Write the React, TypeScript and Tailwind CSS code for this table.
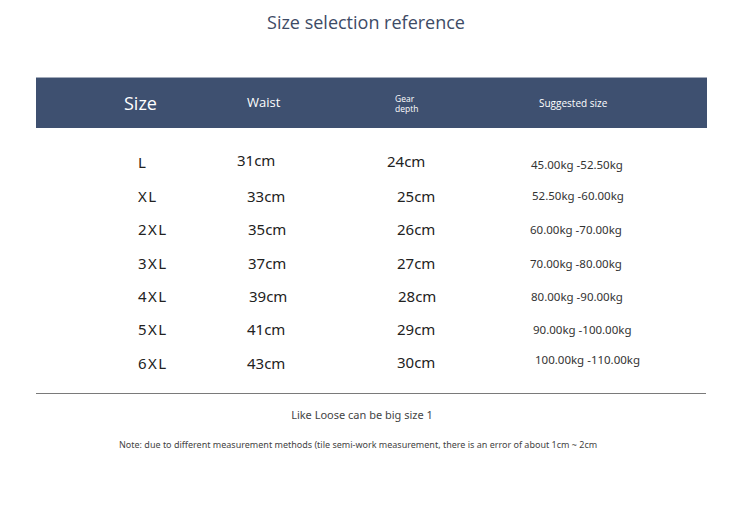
type Row = {
  size: string;
  waist: string;
  gear: string;
  kg: string;
  waistCls: string;
  gearCls: string;
  kgCls: string;
};

const rows: Row[] = [
  { size: "L", waist: "31cm", gear: "24cm", kg: "45.00kg -52.50kg", waistCls: "ml-[-10px] -translate-y-[2px]", gearCls: "ml-[-10px] -translate-y-[1px]", kgCls: "translate-y-[2px]" },
  { size: "XL", waist: "33cm", gear: "25cm", kg: "52.50kg -60.00kg", waistCls: "", gearCls: "", kgCls: "ml-[1px]" },
  { size: "2XL", waist: "35cm", gear: "26cm", kg: "60.00kg -70.00kg", waistCls: "ml-[1px]", gearCls: "", kgCls: "ml-[-1px]" },
  { size: "3XL", waist: "37cm", gear: "27cm", kg: "70.00kg -80.00kg", waistCls: "ml-[1px]", gearCls: "", kgCls: "ml-[-1px] translate-y-[1px]" },
  { size: "4XL", waist: "39cm", gear: "28cm", kg: "80.00kg -90.00kg", waistCls: "ml-[2px]", gearCls: "ml-[1px]", kgCls: "" },
  { size: "5XL", waist: "41cm", gear: "29cm", kg: "90.00kg -100.00kg", waistCls: "", gearCls: "", kgCls: "ml-[2px]" },
  { size: "6XL", waist: "43cm", gear: "30cm", kg: "100.00kg -110.00kg", waistCls: "", gearCls: "-translate-y-[1px]", kgCls: "ml-[4px] text-[10.5px] -translate-y-[3px]" },
];

export default function App() {
  return (
    <div className="w-[750px] h-[529px] bg-white overflow-hidden" style={{ fontFamily: "'Noto Sans', 'Open Sans', sans-serif" }}>
      <h1 className="pt-[10px] pr-[18px] text-center text-[18px] leading-[24px] text-[#3d4b66] font-['Open_Sans',sans-serif]">
        Size selection reference
      </h1>

      <div className="ml-[36px] w-[671px] mt-[43px] h-[51px] bg-[#3e5070] border-t border-[#a3abba] flex items-center text-white font-['Open_Sans',sans-serif]">
        <div className="w-[88px] shrink-0" />
        <div className="w-[123px] shrink-0 text-[18px] font-medium">Size</div>
        <div className="w-[148px] shrink-0 text-[13px] font-medium">Waist</div>
        <div className="w-[144px] shrink-0 text-[8.5px] leading-[10px] font-medium pt-[1px]">
          Gear
          <br />
          depth
        </div>
        <div className="text-[10px] font-medium">Suggested size</div>
      </div>

      <div className="mt-[18px] text-[#222]">
        {rows.map((r) => (
          <div key={r.size} className="flex items-center pl-[138px] h-[33.4px]">
            <div className="w-[109px] shrink-0 text-[15px] tracking-[1.5px]">{r.size}</div>
            <div className="w-[150px] shrink-0">
              <div className={`text-[15px] ${r.waistCls}`}>{r.waist}</div>
            </div>
            <div className="w-[134px] shrink-0">
              <div className={`text-[15px] ${r.gearCls}`}>{r.gear}</div>
            </div>
            <div className="shrink-0">
              <div className={`text-[11.5px] text-[#333] ${r.kgCls}`}>{r.kg}</div>
            </div>
          </div>
        ))}
      </div>

      <div className="ml-[36px] w-[670px] mt-[13px] border-t border-[#7a7a7a]" />

      <p className="mt-[13px] text-center text-[11px] text-[#444] pr-[26px]">Like Loose can be big size 1</p>
      <p className="mt-[15px] pl-[119px] text-[9px] text-[#444]">
        Note: due to different measurement methods (tile semi-work measurement, there is an error of about 1cm ~ 2cm
      </p>
    </div>
  );
}
